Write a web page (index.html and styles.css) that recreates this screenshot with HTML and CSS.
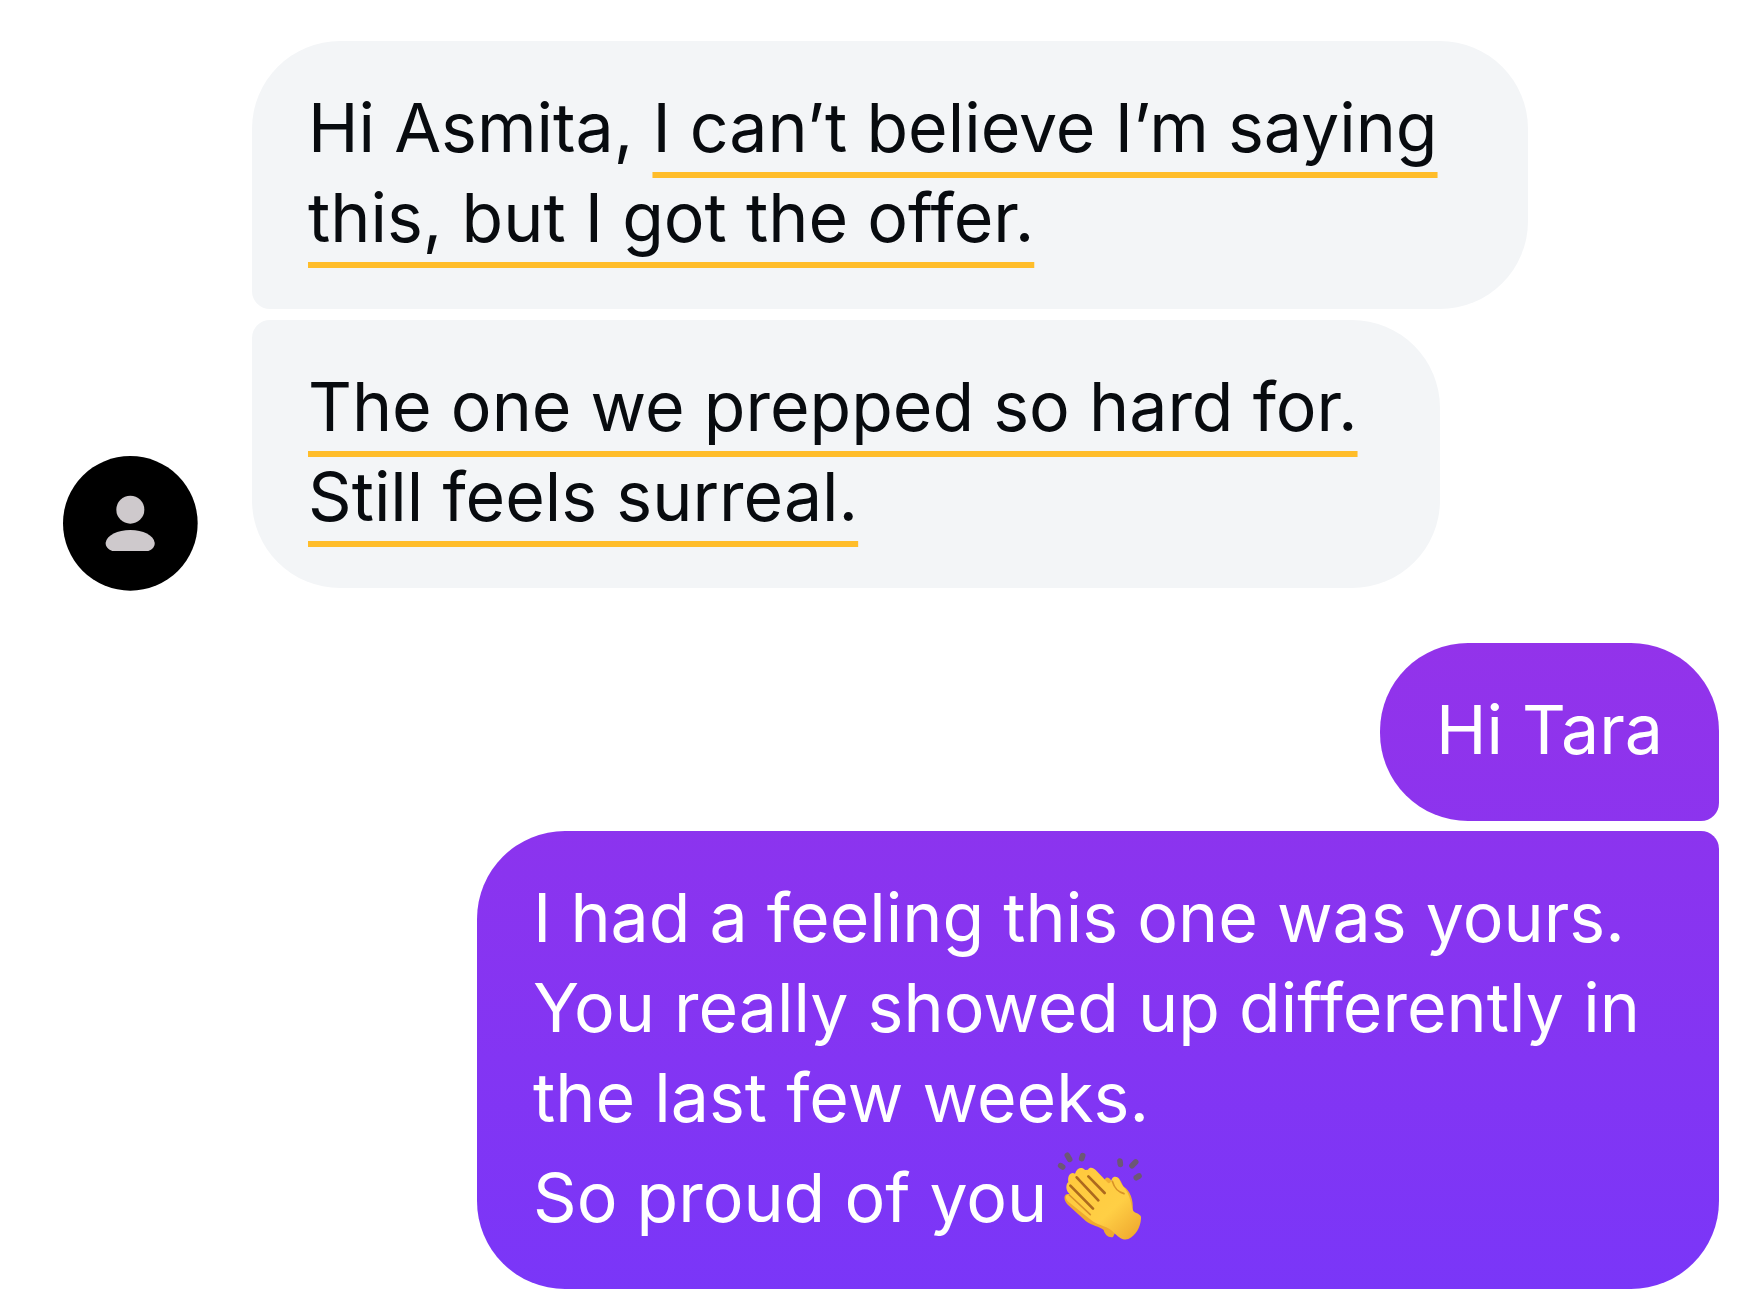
FILE: index.html
```html
<!DOCTYPE html>
<html lang="en">
<head>
    <meta charset="UTF-8">
    <meta name="viewport" content="width=device-width, initial-scale=1.0">
    <title>Chat</title>
    <link rel="stylesheet" href="styles.css">
</head>
<body>
    <main class="chat">
        <section class="group received">
            <svg class="avatar" viewBox="0 0 405 405" role="img" aria-label="Tara">
                <circle cx="202" cy="202" r="202" fill="#000"/>
                <circle cx="202" cy="161" r="42" fill="#cec9cc"/>
                <path d="M148 285C134 279 127 270 128 260C131 238 164 222 202 222C240 222 272 238 275 260C276 270 270 279 256 285Z" fill="#cec9cc"/>
            </svg>
            <div class="bubbles">
                <p class="bubble offer">Hi Asmita, <span class="mark">I can’t believe I’m saying<br>this, but I got the offer.</span></p>
                <p class="bubble prep"><span class="mark">The one we prepped so hard for.<br>Still feels surreal.</span></p>
            </div>
        </section>

        <section class="group sent">
            <p class="bubble">Hi Tara</p>
            <p class="bubble reply">I had a feeling this one was yours.<br>You really showed up differently in<br>the last few weeks.<br>So proud of you<svg class="clap" viewBox="36 9 279 297" role="img" aria-label="clapping hands">
                    <defs>
                        <linearGradient id="skin" x1="0" y1="0" x2="1" y2="1">
                            <stop offset="0" stop-color="#ffc83c"/>
                            <stop offset="0.6" stop-color="#ffcf45"/>
                            <stop offset="1" stop-color="#eda32c"/>
                        </linearGradient>
                    </defs>
                    <!-- back hand -->
                    <path d="M76 166C65 172 72 190 82 199L135 247C153 260 175 263 188 273C191 287 203 297 216 294L238 250L120 170Z" fill="#efa92f"/>
                    <path d="M188 130C192 112 202 112 210 124L213 150C208 130 214 113 226 114C237 116 241 133 248 143C267 154 278 181 275 215L230 230Z" fill="#f0ad33"/>
                    <!-- front hand -->
                    <path d="M141 92C146 82 158 86 164 93L199 130C207 138 210 126 213 119C219 109 232 113 236 124C239 136 250 145 258 158C269 177 270 200 277 216C284 224 303 225 300 239C298 265 285 288 262 300C245 306 230 292 219 281C202 262 174 260 155 247L82 188C69 176 75 164 86 165C73 156 74 135 82 130C79 109 89 98 102 104C109 86 122 83 132 93Z" fill="url(#skin)"/>
                    <g fill="none" stroke="#ad691e" stroke-width="8" stroke-linecap="round">
                        <path d="M142 112L191 162"/>
                        <path d="M107 115L172 184"/>
                        <path d="M88 140L156 209"/>
                    </g>
                    <path d="M85 168L148 227" fill="none" stroke="#d8912a" stroke-width="5" stroke-linecap="round"/>
                    <path d="M214 127C221 151 232 159 249 164" fill="none" stroke="#d99327" stroke-width="5" stroke-linecap="round"/>
                    <g stroke="#6c5775" stroke-width="17" stroke-linecap="round">
                        <path d="M59 80L65 84"/>
                        <path d="M79 49L86 61"/>
                        <path d="M125 50L122 59"/>
                        <path d="M237 66L238 76"/>
                        <path d="M284 69L273 80"/>
                        <path d="M294 111L286 116"/>
                    </g>
                </svg></p>
        </section>
    </main>
</body>
</html>
```
FILE: styles.css
```css
* {
    box-sizing: border-box;
}
body {
    margin: 0;
    background-color: #fff;
    font-family: Inter, "Liberation Sans", sans-serif;
    font-size: 68px;
    line-height: 90px;
}
.chat {
    display: flex;
    flex-direction: column;
    gap: 52px;
    padding: 41px 36px 15px 63px;
}
.group {
    display: flex;
}
.received {
    align-items: flex-end;
    gap: 54px;
}
.avatar {
    flex: none;
    width: 135px;
    height: 135px;
}
.bubbles {
    display: flex;
    flex: 1;
    flex-direction: column;
    align-items: flex-start;
    gap: 11px;
    padding-bottom: 3px;
}
.sent {
    flex-direction: column;
    align-items: flex-end;
    gap: 10px;
}
.bubble {
    margin: 0;
    padding: 41px 56px 47px;
    border-radius: 88px;
}
.offer {
    width: 87%;
}
.prep {
    width: 81%;
}
.reply {
    width: 75%;
}
.received .bubble {
    background-color: #f3f5f7;
    color: #080b0f;
}
.received .bubble:first-child {
    border-bottom-left-radius: 18px;
}
.received .bubble:last-child {
    border-top-left-radius: 18px;
}
/* one gradient runs through all the sent bubbles */
.sent .bubble {
    background: linear-gradient(#9333ea 49%, #7a36f8 99%) fixed;
    color: #fff;
}
.sent .bubble:first-child {
    border-bottom-right-radius: 18px;
}
.sent .bubble:last-child {
    border-top-right-radius: 18px;
}
.mark {
    text-decoration: underline 6px #ffbd2a;
    text-decoration-skip-ink: none;
    text-underline-offset: 20px;
}
.clap {
    width: 93px;
    height: 99px;
    margin-left: 6px;
    vertical-align: -19px;
}
```
